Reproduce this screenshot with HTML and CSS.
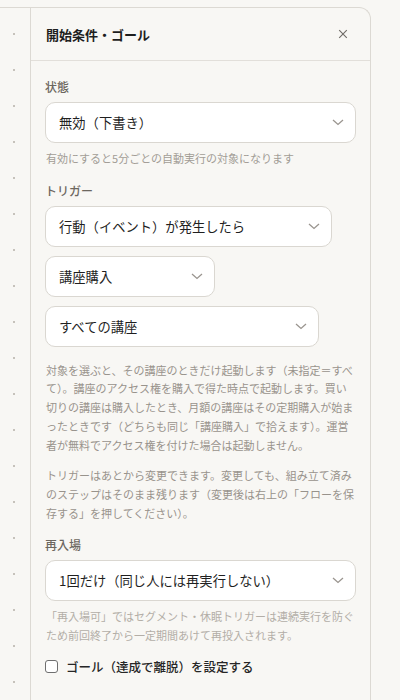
FILE: index.html
```html
<!DOCTYPE html>
<html lang="ja">
<head>
<meta charset="utf-8">
<link rel="stylesheet" href="styles.css">
</head>
<body>
<div class="frame">
  <div class="rail"></div>
  <section class="panel">
    <header class="panel-head">
      <h2 class="panel-title">開始条件・ゴール</h2>
      <button class="close" aria-label="閉じる">
        <svg width="10" height="10" viewBox="0 0 10 10"><path d="M1.2 1.2L8.8 8.8M8.8 1.2L1.2 8.8" stroke="#6f6b66" stroke-width="1.1" fill="none"/></svg>
      </button>
    </header>
    <div class="panel-body">
      <div class="field">
        <div class="field-label">状態</div>
        <div class="select select-full"><span>無効（下書き）</span><svg class="chev" width="12" height="7" viewBox="0 0 12 7"><path d="M1 1l5 4.5L11 1" stroke="#9a958f" stroke-width="1.3" fill="none"/></svg></div>
        <p class="help">有効にすると5分ごとの自動実行の対象になります</p>
      </div>
      <div class="field">
        <div class="field-label">トリガー</div>
        <div class="select-stack">
          <div class="select select-w1"><span>行動（イベント）が発生したら</span><svg class="chev" width="12" height="7" viewBox="0 0 12 7"><path d="M1 1l5 4.5L11 1" stroke="#9a958f" stroke-width="1.3" fill="none"/></svg></div>
          <div class="select select-w2"><span>講座購入</span><svg class="chev" width="12" height="7" viewBox="0 0 12 7"><path d="M1 1l5 4.5L11 1" stroke="#9a958f" stroke-width="1.3" fill="none"/></svg></div>
          <div class="select select-w3"><span>すべての講座</span><svg class="chev" width="12" height="7" viewBox="0 0 12 7"><path d="M1 1l5 4.5L11 1" stroke="#9a958f" stroke-width="1.3" fill="none"/></svg></div>
        </div>
        <p class="note">対象を選ぶと、その講座のときだけ起動します（未指定＝すべて）。講座のアクセス権を購入で得た時点で起動します。買い切りの講座は購入したとき、月額の講座はその定期購入が始まったときです（どちらも同じ「講座購入」で拾えます）。運営者が無料でアクセス権を付けた場合は起動しません。</p>
        <p class="note note-2">トリガーはあとから変更できます。変更しても、組み立て済みのステップはそのまま残ります（変更後は右上の「フローを保存する」を押してください）。</p>
      </div>
      <div class="field">
        <div class="field-label">再入場</div>
        <div class="select select-full"><span>1回だけ（同じ人には再実行しない）</span><svg class="chev" width="12" height="7" viewBox="0 0 12 7"><path d="M1 1l5 4.5L11 1" stroke="#9a958f" stroke-width="1.3" fill="none"/></svg></div>
        <p class="help help-light">「再入場可」ではセグメント・休眠トリガーは連続実行を防ぐため前回終了から一定期間あけて再投入されます。</p>
      </div>
      <label class="check-row"><span class="checkbox"></span><span class="check-label">ゴール（達成で離脱）を設定する</span></label>
    </div>
  </section>
</div>
</body>
</html>
```
FILE: styles.css
```css
* { box-sizing: border-box; }
html, body { margin: 0; padding: 0; }
body {
  background: #f8f7f4;
  font-family: "Noto Sans CJK JP", "Noto Sans", sans-serif;
  color: #222;
  width: 400px;
  height: 700px;
  overflow: hidden;
}
.frame {
  margin-top: 7px;
  width: 371px;
  height: 693px;
  display: flex;
  border-top: 1px solid #dcd9d3;
  border-right: 1px solid #dcd9d3;
  border-top-right-radius: 12px;
}
.rail {
  width: 31px;
  flex: none;
  border-right: 1px solid #dcd9d3;
  background-image: radial-gradient(circle, #c6c2bb 0.9px, transparent 1.3px);
  background-size: 36px 36px;
  background-position: -4px 8px;
}
.panel { flex: 1; min-width: 0; }
.panel-head {
  height: 53px;
  border-bottom: 1px solid #e2dfda;
  display: flex;
  align-items: center;
  justify-content: space-between;
  padding: 0 15px 0 15px;
}
.panel-title {
  margin: 0;
  font-size: 13px;
  font-weight: 700;
  color: #1e1e1e;
}
.close {
  width: 24px;
  height: 24px;
  border: 0;
  background: none;
  padding: 0;
  display: flex;
  align-items: center;
  justify-content: center;
  cursor: pointer;
}
.panel-body { padding: 17px 14px 0 14px; }
.field + .field { margin-top: 14px; }
.field-label {
  font-size: 12px;
  line-height: 18px;
  font-weight: 500;
  color: #6c675f;
  margin-bottom: 6px;
}
.select {
  height: 41px;
  border: 1px solid #dad7d1;
  border-radius: 10px;
  background: #fff;
  display: flex;
  align-items: center;
  justify-content: space-between;
  padding: 0 11px 0 13px;
  font-size: 13.3px;
  color: #1f1f1f;
}
.chev { flex: none; }
.select-full { width: 100%; }
.select-w1 { width: 287px; }
.select-w2 { width: 170px; }
.select-w3 { width: 274px; }
.select-stack { display: flex; flex-direction: column; gap: 9px; }
.help {
  margin: 6px 0 0 1px;
  font-size: 11px;
  line-height: 18.7px;
  color: #a29d96;
}
.help-light { color: #b3aea7; }
.note {
  margin: 14px 0 0 1px;
  font-size: 11px;
  line-height: 18.7px;
  color: #98938c;
}
.note-2 { margin-top: 12px; }
.check-row {
  margin-top: 12px;
  display: flex;
  align-items: center;
  gap: 8px;
  height: 20px;
}
.checkbox {
  width: 13px;
  height: 13px;
  border: 1px solid #6f6f6f;
  border-radius: 3px;
  background: #fff;
  flex: none;
}
.check-label {
  font-size: 12.5px;
  font-weight: 500;
  color: #262626;
}
```
